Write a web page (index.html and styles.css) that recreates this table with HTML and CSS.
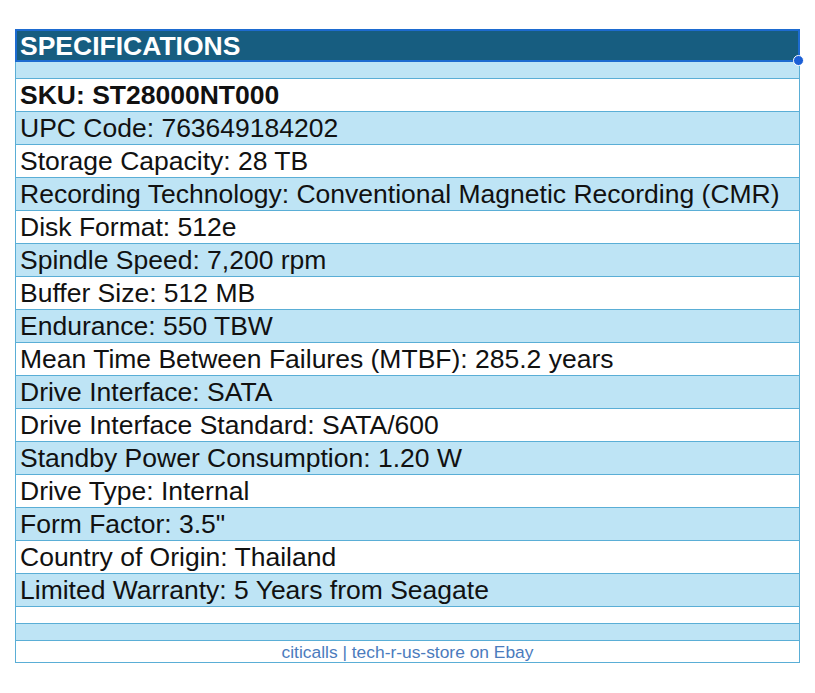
FILE: index.html
```html
<!DOCTYPE html>
<html>
<head>
<meta charset="utf-8">
<link rel="stylesheet" href="styles.css">
</head>
<body>
<div class="sheet">
  <div class="head">SPECIFICATIONS<span class="handle"></span></div>
  <div class="row blue spacer"></div>
  <div class="row white sku">SKU: ST28000NT000</div>
  <div class="row blue">UPC Code: 763649184202</div>
  <div class="row white">Storage Capacity: 28 TB</div>
  <div class="row blue">Recording Technology: Conventional Magnetic Recording (CMR)</div>
  <div class="row white">Disk Format: 512e</div>
  <div class="row blue">Spindle Speed: 7,200 rpm</div>
  <div class="row white">Buffer Size: 512 MB</div>
  <div class="row blue">Endurance: 550 TBW</div>
  <div class="row white">Mean Time Between Failures (MTBF): 285.2 years</div>
  <div class="row blue">Drive Interface: SATA</div>
  <div class="row white">Drive Interface Standard: SATA/600</div>
  <div class="row blue">Standby Power Consumption: 1.20 W</div>
  <div class="row white">Drive Type: Internal</div>
  <div class="row blue">Form Factor: 3.5"</div>
  <div class="row white">Country of Origin: Thailand</div>
  <div class="row blue">Limited Warranty: 5 Years from Seagate</div>
  <div class="row white spacer"></div>
  <div class="row blue spacer"></div>
  <div class="row white foot">citicalls | tech-r-us-store on Ebay</div>
</div>
</body>
</html>
```
FILE: styles.css
```css
html, body {
  margin: 0;
  padding: 0;
  background: #ffffff;
}
body {
  padding: 29px 15px 0 15px;
  font-family: "Liberation Sans", Arial, sans-serif;
}
.sheet {
  width: 785px;
  display: flex;
  flex-direction: column;
}
.head {
  position: relative;
  height: 29px;
  background: #175d80;
  border: 2px solid #1d6bd0;
  color: #ffffff;
  font-weight: bold;
  font-size: 26.5px;
  line-height: 30px;
  padding-left: 3px;
}
.handle {
  position: absolute;
  right: -6px;
  bottom: -6px;
  width: 9px;
  height: 9px;
  border-radius: 50%;
  background: #1b5fd6;
  border: 1px solid #ffffff;
}
.row {
  height: 32px;
  line-height: 33px;
  border-left: 1px solid #5aaed6;
  border-right: 1px solid #5aaed6;
  border-bottom: 1px solid #5aaed6;
  font-size: 26.5px;
  color: #111111;
  padding-left: 4px;
  white-space: nowrap;
}
.blue { background: #bee4f5; }
.white { background: #ffffff; }
.sku { font-weight: bold; }
.spacer { height: 16px; }
.foot {
  height: 21px;
  line-height: 22px;
  font-size: 17.4px;
  color: #4b7bbd;
  text-align: center;
  padding-left: 0;
}
```
